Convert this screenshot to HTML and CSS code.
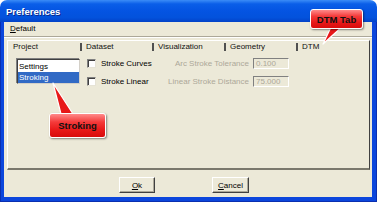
FILE: index.html
```html
<!DOCTYPE html>
<html lang="en">
<head>
    <meta charset="UTF-8">
    <title>Preferences</title>
    <link rel="stylesheet" href="styles.css">
</head>
<body>
    <div class="window">
        <div class="titlebar">Preferences</div>
        <div class="frame">
            <div class="client">
                <div class="menubar">
                    <span class="menu-item"><u>D</u>efault</span>
                </div>

                <div class="tabs">
                    <div class="tab-strip">
                        <div class="tab">Project</div>
                        <div class="tab">Dataset</div>
                        <div class="tab">Visualization</div>
                        <div class="tab">Geometry</div>
                        <div class="tab active">DTM</div>
                    </div>
                    <div class="tab-panel">
                        <div class="listbox">
                            <div class="list-item">Settings</div>
                            <div class="list-item selected">Stroking</div>
                        </div>
                        <div class="options">
                            <label class="check"><span class="box"></span>Stroke Curves</label>
                            <span class="field-label">Arc Stroke Tolerance</span>
                            <span class="field">0.100</span>

                            <label class="check"><span class="box"></span>Stroke Linear</label>
                            <span class="field-label">Linear Stroke Distance</span>
                            <span class="field">75.000</span>
                        </div>
                    </div>
                </div>

                <div class="buttons">
                    <button class="btn"><u>O</u>k</button>
                    <button class="btn btn-cancel"><u>C</u>ancel</button>
                </div>
            </div>
        </div>

        <!-- annotation callouts -->
        <svg class="tail tail-dtm" width="30" height="24" viewBox="0 0 30 24">
            <polygon points="12,2 24,2 3,21" fill="#e81818" stroke="#fff" stroke-width="1.2" stroke-linejoin="round"/>
        </svg>
        <div class="callout callout-dtm">DTM Tab</div>

        <svg class="tail tail-stroking" width="30" height="36" viewBox="0 0 30 36">
            <polygon points="4,2 24,33 12,33" fill="#e81818" stroke="#fff" stroke-width="1.2" stroke-linejoin="round"/>
        </svg>
        <div class="callout callout-stroking">Stroking</div>
    </div>
</body>
</html>
```

FILE: styles.css
```css
* {
    margin: 0;
    padding: 0;
    box-sizing: border-box;
}

body {
    background: #fff;
    font-family: 'Liberation Sans', Arial, sans-serif;
    font-size: 8px;
    color: #000;
}

.window {
    width: 377px;
    height: 202px;
    position: relative;
    display: flex;
    flex-direction: column;
}

.titlebar {
    height: 22px;
    border-radius: 7px 7px 0 0;
    background: linear-gradient(to bottom, #3b8cf7 0%, #0a5ee8 18%, #0454e2 50%, #0352dc 80%, #0342c8 100%);
    color: #fff;
    font-weight: bold;
    font-size: 9.5px;
    line-height: 24px;
    padding-left: 6px;
    text-shadow: 1px 1px 0 #0a2a8a;
}

.frame {
    flex: 1;
    display: flex;
    background: #0b46dc;
    padding: 0 5px 5px 4px;
    box-shadow: inset 1px 0 0 #0a2fb0, inset -1px 0 0 #0a2fb0, inset 0 -1px 0 #0a2fb0;
}

.client {
    flex: 1;
    background: #ece9d8;
    display: flex;
    flex-direction: column;
}

.menubar {
    height: 15px;
    padding: 2px 0 0 6px;
    border-bottom: 1px solid #aca899;
    box-shadow: 0 1px 0 #fff;
}

.menu-item {
    line-height: 10px;
}

.tabs {
    margin: 3px 2px 0 3px;
    display: flex;
    flex-direction: column;
}

.tab-strip {
    display: flex;
    border-top: 1px solid #fff;
    border-left: 1px solid #fff;
    border-right: 1px solid #404040;
    padding: 2px 0 1px;
    height: 12px;
}

.tab {
    width: 72px;
    height: 8px;
    line-height: 8px;
    padding-left: 5px;
    color: #111;
}

.tab + .tab {
    border-left: 2px solid #505050;
    padding-left: 4px;
}

.tab:last-child {
    flex: 1;
}

.tab-panel {
    height: 118px;
    border-left: 1px solid #fff;
    border-right: 1px solid #404040;
    border-bottom: 2px solid #7a786c;
    display: flex;
    align-items: flex-start;
    padding: 6px 0 0 9px;
}

.listbox {
    width: 63px;
    height: 25px;
    margin-top: 1px;
    background: #fff;
    border-top: 1px solid #404040;
    border-left: 1px solid #404040;
    border-right: 1px solid #d4d0c8;
    border-bottom: 1px solid #d4d0c8;
    box-shadow: -1px -1px 0 #808080;
    padding-top: 1px;
}

.list-item {
    height: 11px;
    line-height: 11px;
    padding-left: 1px;
}

.list-item.selected {
    background: #316ac5;
    color: #fff;
}

.options {
    margin-left: 7px;
    display: grid;
    grid-template-columns: 73px 85px 36px;
    grid-auto-rows: 11px;
    row-gap: 7px;
    column-gap: 4px;
    align-items: center;
}

.check {
    display: flex;
    align-items: center;
    gap: 5px;
}

.box {
    width: 9px;
    height: 9px;
    background: #fff;
    border-top: 1px solid #808080;
    border-left: 1px solid #808080;
    border-right: 1px solid #e6e3d6;
    border-bottom: 1px solid #e6e3d6;
    box-shadow: inset 1px 1px 0 #404040;
}

.field-label {
    text-align: right;
    color: #aca899;
}

.field {
    height: 11px;
    line-height: 10px;
    padding-left: 2px;
    color: #aca899;
    border-top: 1px solid #808080;
    border-left: 1px solid #808080;
    border-right: 1px solid #fff;
    border-bottom: 1px solid #fff;
}

.buttons {
    display: flex;
    justify-content: center;
    gap: 57px;
    padding: 7px 8px 0 0;
}

.btn {
    width: 36px;
    height: 16px;
    font-family: 'Liberation Sans', Arial, sans-serif;
    font-size: 8px;
    background: #ece9d8;
    border: none;
    border-top: 1px solid #fff;
    border-left: 1px solid #fff;
    border-right: 1px solid #404040;
    border-bottom: 1px solid #404040;
    box-shadow: inset -1px -1px 0 #aca899;
    color: #000;
}

.btn-cancel {
    width: 37px;
}

.callout {
    position: absolute;
    background: linear-gradient(to bottom, #ff8a8a 0%, #f43a3a 35%, #e81818 70%, #d80c0c 100%);
    border: 1.5px solid #fff;
    border-radius: 3px;
    box-shadow: 1px 1px 2px rgba(0, 0, 0, 0.45);
    font-weight: bold;
    font-size: 9.5px;
    color: #111;
    display: flex;
    justify-content: center;
    align-items: center;
}

.callout-dtm {
    left: 310px;
    top: 9px;
    width: 53px;
    height: 20px;
}

.callout-stroking {
    left: 49px;
    top: 113px;
    width: 57px;
    height: 25px;
}

.tail {
    position: absolute;
}

.tail-dtm {
    left: 320px;
    top: 23px;
}

.tail-stroking {
    left: 49px;
    top: 81px;
}
```
